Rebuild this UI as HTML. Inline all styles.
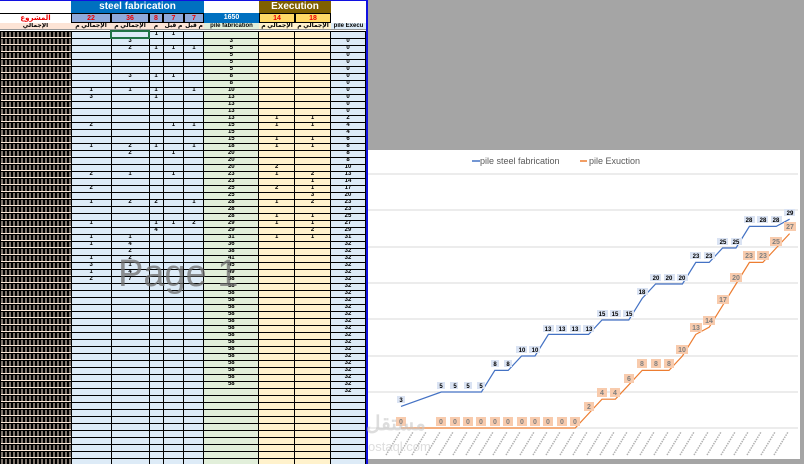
<!DOCTYPE html>
<html><head><meta charset="utf-8"><style>
*{margin:0;padding:0;box-sizing:border-box}
body{width:804px;height:464px;overflow:hidden;background:#a5a5a5;position:relative;font-family:"Liberation Sans","DejaVu Sans",sans-serif}
#sheet{position:absolute;left:0;top:0;width:368px;height:464px;background:#fff;border-top:1px solid #1010e0;border-right:2px solid #1010e0;overflow:hidden}
.h{position:absolute;text-align:center;font-weight:bold;overflow:hidden;white-space:nowrap}
table{position:absolute;left:0;top:29px;border-collapse:collapse;table-layout:fixed}
td{height:7px;border:1px solid #000;font-size:6px;line-height:5px;font-weight:bold;text-align:center;padding:0;overflow:hidden;background:#ddebf7}
td.a{background:#fde9d9 linear-gradient(90deg,#000 75%,transparent 75%) 1px 0/4px 5px repeat-x}
td.g{background:#e2efda}
td.y{background:#fff2cc}
</style></head><body>
<div id="sheet">
<div class="h" style="left:71px;top:0;width:133px;height:12px;background:#0070c0;color:#fff;font-size:10px;line-height:12px">steel fabrication</div>
<div class="h" style="left:259px;top:0;width:72px;height:12px;background:#7f6000;color:#fff;font-size:10px;line-height:11px">Execution</div>
<div class="h" style="left:0;top:12px;width:71px;height:10px;color:#e00;font-size:7px;line-height:10px;border-top:1px solid #000">المشروع</div>
<div class="h" style="left:71px;top:12px;width:40px;height:10px;background:#8ea9db;color:#e00;font-size:7px;line-height:10px;border:1px solid #000">22</div>
<div class="h" style="left:111px;top:12px;width:38px;height:10px;background:#8ea9db;color:#e00;font-size:7px;line-height:10px;border:1px solid #000">36</div>
<div class="h" style="left:149px;top:12px;width:14px;height:10px;background:#8ea9db;color:#e00;font-size:7px;line-height:10px;border:1px solid #000">8</div>
<div class="h" style="left:163px;top:12px;width:21px;height:10px;background:#8ea9db;color:#e00;font-size:7px;line-height:10px;border:1px solid #000">7</div>
<div class="h" style="left:184px;top:12px;width:20px;height:10px;background:#8ea9db;color:#e00;font-size:7px;line-height:10px;border:1px solid #000">7</div>
<div class="h" style="left:204px;top:12px;width:55px;height:10px;background:#0070c0;color:#fff;font-size:7px;line-height:10px">1650</div>
<div class="h" style="left:259px;top:12px;width:36px;height:10px;background:#ffd966;color:#e00;font-size:7px;line-height:10px;border:1px solid #000">14</div>
<div class="h" style="left:295px;top:12px;width:36px;height:10px;background:#ffd966;color:#e00;font-size:7px;line-height:10px;border:1px solid #000">18</div>
<div class="h" style="left:0;top:22px;width:71px;height:7px;background:#fce4d6;font-size:6px;line-height:7px">الإجمالي</div>
<div class="h" style="left:71px;top:22px;width:40px;height:7px;background:#fce4d6;font-size:6px;line-height:7px">الإجمالي م</div>
<div class="h" style="left:111px;top:22px;width:38px;height:7px;background:#fce4d6;font-size:6px;line-height:7px">الإجمالي م</div>
<div class="h" style="left:149px;top:22px;width:14px;height:7px;background:#fce4d6;font-size:6px;line-height:7px">م</div>
<div class="h" style="left:163px;top:22px;width:21px;height:7px;background:#fce4d6;font-size:6px;line-height:7px">م قبل</div>
<div class="h" style="left:184px;top:22px;width:20px;height:7px;background:#fce4d6;font-size:6px;line-height:7px">م قبل</div>
<div class="h" style="left:204px;top:22px;width:55px;height:7px;background:#e2efda;font-size:6px;line-height:7px">pile fabrication</div>
<div class="h" style="left:259px;top:22px;width:36px;height:7px;background:#fff2cc;font-size:6px;line-height:7px">الإجمالي م</div>
<div class="h" style="left:295px;top:22px;width:36px;height:7px;background:#fff2cc;font-size:6px;line-height:7px">الإجمالي م</div>
<div class="h" style="left:331px;top:22px;width:35px;height:7px;background:#ddebf7;font-size:6px;line-height:7px">pile Execu</div>
<table>
<colgroup><col style="width:71px"><col style="width:40px"><col style="width:38px"><col style="width:14px"><col style="width:21px"><col style="width:20px"><col style="width:55px"><col style="width:36px"><col style="width:36px"><col style="width:35px"></colgroup>
<tr><td class="a"></td><td></td><td style="border:2px solid #217346"></td><td>1</td><td>1</td><td></td><td class="g"></td><td class="y"></td><td class="y"></td><td></td></tr>
<tr><td class="a"></td><td></td><td>3</td><td></td><td></td><td></td><td class="g">3</td><td class="y"></td><td class="y"></td><td>0</td></tr>
<tr><td class="a"></td><td></td><td>2</td><td>1</td><td>1</td><td>1</td><td class="g">5</td><td class="y"></td><td class="y"></td><td>0</td></tr>
<tr><td class="a"></td><td></td><td></td><td></td><td></td><td></td><td class="g">5</td><td class="y"></td><td class="y"></td><td>0</td></tr>
<tr><td class="a"></td><td></td><td></td><td></td><td></td><td></td><td class="g">5</td><td class="y"></td><td class="y"></td><td>0</td></tr>
<tr><td class="a"></td><td></td><td></td><td></td><td></td><td></td><td class="g">5</td><td class="y"></td><td class="y"></td><td>0</td></tr>
<tr><td class="a"></td><td></td><td>3</td><td>1</td><td>1</td><td></td><td class="g">8</td><td class="y"></td><td class="y"></td><td>0</td></tr>
<tr><td class="a"></td><td></td><td></td><td></td><td></td><td></td><td class="g">8</td><td class="y"></td><td class="y"></td><td>0</td></tr>
<tr><td class="a"></td><td>1</td><td>1</td><td>1</td><td></td><td>1</td><td class="g">10</td><td class="y"></td><td class="y"></td><td>0</td></tr>
<tr><td class="a"></td><td>3</td><td></td><td>1</td><td></td><td></td><td class="g">13</td><td class="y"></td><td class="y"></td><td>0</td></tr>
<tr><td class="a"></td><td></td><td></td><td></td><td></td><td></td><td class="g">13</td><td class="y"></td><td class="y"></td><td>0</td></tr>
<tr><td class="a"></td><td></td><td></td><td></td><td></td><td></td><td class="g">13</td><td class="y"></td><td class="y"></td><td>0</td></tr>
<tr><td class="a"></td><td></td><td></td><td></td><td></td><td></td><td class="g">13</td><td class="y">1</td><td class="y">1</td><td>2</td></tr>
<tr><td class="a"></td><td>2</td><td></td><td></td><td>1</td><td>1</td><td class="g">15</td><td class="y">1</td><td class="y">1</td><td>4</td></tr>
<tr><td class="a"></td><td></td><td></td><td></td><td></td><td></td><td class="g">15</td><td class="y"></td><td class="y"></td><td>4</td></tr>
<tr><td class="a"></td><td></td><td></td><td></td><td></td><td></td><td class="g">15</td><td class="y">1</td><td class="y">1</td><td>6</td></tr>
<tr><td class="a"></td><td>1</td><td>2</td><td>1</td><td></td><td>1</td><td class="g">18</td><td class="y">1</td><td class="y">1</td><td>8</td></tr>
<tr><td class="a"></td><td></td><td>2</td><td></td><td>1</td><td></td><td class="g">20</td><td class="y"></td><td class="y"></td><td>8</td></tr>
<tr><td class="a"></td><td></td><td></td><td></td><td></td><td></td><td class="g">20</td><td class="y"></td><td class="y"></td><td>8</td></tr>
<tr><td class="a"></td><td></td><td></td><td></td><td></td><td></td><td class="g">20</td><td class="y">2</td><td class="y"></td><td>10</td></tr>
<tr><td class="a"></td><td>2</td><td>1</td><td></td><td>1</td><td></td><td class="g">23</td><td class="y">1</td><td class="y">2</td><td>13</td></tr>
<tr><td class="a"></td><td></td><td></td><td></td><td></td><td></td><td class="g">23</td><td class="y"></td><td class="y">1</td><td>14</td></tr>
<tr><td class="a"></td><td>2</td><td></td><td></td><td></td><td></td><td class="g">25</td><td class="y">2</td><td class="y">1</td><td>17</td></tr>
<tr><td class="a"></td><td></td><td></td><td></td><td></td><td></td><td class="g">25</td><td class="y"></td><td class="y">3</td><td>20</td></tr>
<tr><td class="a"></td><td>1</td><td>2</td><td>2</td><td></td><td>1</td><td class="g">28</td><td class="y">1</td><td class="y">2</td><td>23</td></tr>
<tr><td class="a"></td><td></td><td></td><td></td><td></td><td></td><td class="g">28</td><td class="y"></td><td class="y"></td><td>23</td></tr>
<tr><td class="a"></td><td></td><td></td><td></td><td></td><td></td><td class="g">28</td><td class="y">1</td><td class="y">1</td><td>25</td></tr>
<tr><td class="a"></td><td>1</td><td></td><td>1</td><td>1</td><td>2</td><td class="g">29</td><td class="y">1</td><td class="y">1</td><td>27</td></tr>
<tr><td class="a"></td><td></td><td></td><td>4</td><td></td><td></td><td class="g">29</td><td class="y"></td><td class="y">2</td><td>29</td></tr>
<tr><td class="a"></td><td>1</td><td>1</td><td></td><td></td><td></td><td class="g">31</td><td class="y">1</td><td class="y">1</td><td>31</td></tr>
<tr><td class="a"></td><td>1</td><td>4</td><td></td><td></td><td></td><td class="g">36</td><td class="y"></td><td class="y"></td><td>32</td></tr>
<tr><td class="a"></td><td></td><td>2</td><td></td><td></td><td></td><td class="g">38</td><td class="y"></td><td class="y"></td><td>32</td></tr>
<tr><td class="a"></td><td>1</td><td>2</td><td></td><td></td><td></td><td class="g">41</td><td class="y"></td><td class="y"></td><td>32</td></tr>
<tr><td class="a"></td><td>3</td><td>1</td><td></td><td></td><td></td><td class="g">45</td><td class="y"></td><td class="y"></td><td>32</td></tr>
<tr><td class="a"></td><td>1</td><td>4</td><td></td><td></td><td></td><td class="g">49</td><td class="y"></td><td class="y"></td><td>32</td></tr>
<tr><td class="a"></td><td>2</td><td>7</td><td></td><td></td><td></td><td class="g">58</td><td class="y"></td><td class="y"></td><td>32</td></tr>
<tr><td class="a"></td><td></td><td></td><td></td><td></td><td></td><td class="g">58</td><td class="y"></td><td class="y"></td><td>32</td></tr>
<tr><td class="a"></td><td></td><td></td><td></td><td></td><td></td><td class="g">58</td><td class="y"></td><td class="y"></td><td>32</td></tr>
<tr><td class="a"></td><td></td><td></td><td></td><td></td><td></td><td class="g">58</td><td class="y"></td><td class="y"></td><td>32</td></tr>
<tr><td class="a"></td><td></td><td></td><td></td><td></td><td></td><td class="g">58</td><td class="y"></td><td class="y"></td><td>32</td></tr>
<tr><td class="a"></td><td></td><td></td><td></td><td></td><td></td><td class="g">58</td><td class="y"></td><td class="y"></td><td>32</td></tr>
<tr><td class="a"></td><td></td><td></td><td></td><td></td><td></td><td class="g">58</td><td class="y"></td><td class="y"></td><td>32</td></tr>
<tr><td class="a"></td><td></td><td></td><td></td><td></td><td></td><td class="g">58</td><td class="y"></td><td class="y"></td><td>32</td></tr>
<tr><td class="a"></td><td></td><td></td><td></td><td></td><td></td><td class="g">58</td><td class="y"></td><td class="y"></td><td>32</td></tr>
<tr><td class="a"></td><td></td><td></td><td></td><td></td><td></td><td class="g">58</td><td class="y"></td><td class="y"></td><td>32</td></tr>
<tr><td class="a"></td><td></td><td></td><td></td><td></td><td></td><td class="g">58</td><td class="y"></td><td class="y"></td><td>32</td></tr>
<tr><td class="a"></td><td></td><td></td><td></td><td></td><td></td><td class="g">58</td><td class="y"></td><td class="y"></td><td>32</td></tr>
<tr><td class="a"></td><td></td><td></td><td></td><td></td><td></td><td class="g">58</td><td class="y"></td><td class="y"></td><td>32</td></tr>
<tr><td class="a"></td><td></td><td></td><td></td><td></td><td></td><td class="g">58</td><td class="y"></td><td class="y"></td><td>32</td></tr>
<tr><td class="a"></td><td></td><td></td><td></td><td></td><td></td><td class="g">58</td><td class="y"></td><td class="y"></td><td>32</td></tr>
<tr><td class="a"></td><td></td><td></td><td></td><td></td><td></td><td class="g">58</td><td class="y"></td><td class="y"></td><td>32</td></tr>
<tr><td class="a"></td><td></td><td></td><td></td><td></td><td></td><td class="g"></td><td class="y"></td><td class="y"></td><td>32</td></tr>
<tr><td class="a"></td><td></td><td></td><td></td><td></td><td></td><td class="g"></td><td class="y"></td><td class="y"></td><td></td></tr>
<tr><td class="a"></td><td></td><td></td><td></td><td></td><td></td><td class="g"></td><td class="y"></td><td class="y"></td><td></td></tr>
<tr><td class="a"></td><td></td><td></td><td></td><td></td><td></td><td class="g"></td><td class="y"></td><td class="y"></td><td></td></tr>
<tr><td class="a"></td><td></td><td></td><td></td><td></td><td></td><td class="g"></td><td class="y"></td><td class="y"></td><td></td></tr>
<tr><td class="a"></td><td></td><td></td><td></td><td></td><td></td><td class="g"></td><td class="y"></td><td class="y"></td><td></td></tr>
<tr><td class="a"></td><td></td><td></td><td></td><td></td><td></td><td class="g"></td><td class="y"></td><td class="y"></td><td></td></tr>
<tr><td class="a"></td><td></td><td></td><td></td><td></td><td></td><td class="g"></td><td class="y"></td><td class="y"></td><td></td></tr>
<tr><td class="a"></td><td></td><td></td><td></td><td></td><td></td><td class="g"></td><td class="y"></td><td class="y"></td><td></td></tr>
<tr><td class="a"></td><td></td><td></td><td></td><td></td><td></td><td class="g"></td><td class="y"></td><td class="y"></td><td></td></tr>
<tr><td class="a"></td><td></td><td></td><td></td><td></td><td></td><td class="g"></td><td class="y"></td><td class="y"></td><td></td></tr>
</table>
<div style="position:absolute;left:0;top:28px;width:366px;height:1px;background:#999"></div>
<div style="position:absolute;left:118px;top:252px;font-size:38px;color:rgba(110,110,110,.75);white-space:nowrap">Page 1</div>
</div>
<svg width="804" height="464" style="position:absolute;left:0;top:0" font-family="Liberation Sans, sans-serif">
<rect x="368" y="150" width="432" height="309" fill="#fff"/>
<g stroke="#d9d9d9" stroke-width="1">
<line x1="368" y1="174" x2="798" y2="174"/><line x1="368" y1="210" x2="798" y2="210"/><line x1="368" y1="247" x2="798" y2="247"/><line x1="368" y1="283" x2="798" y2="283"/><line x1="368" y1="319" x2="798" y2="319"/><line x1="368" y1="356" x2="798" y2="356"/><line x1="368" y1="392" x2="798" y2="392"/><line x1="368" y1="428" x2="798" y2="428"/>
</g>
<line x1="472" y1="161" x2="480" y2="161" stroke="#4472c4" stroke-width="1.5"/>
<text x="480" y="164" font-size="9" fill="#595959">pile steel fabrication</text>
<line x1="580" y1="161" x2="587" y2="161" stroke="#ed7d31" stroke-width="1.5"/>
<text x="589" y="164" font-size="9" fill="#595959">pile Exuction</text>
<polyline fill="none" stroke="#4472c4" stroke-width="1.2" points="401,406.4 441.2,392 454.6,392 468,392 481.4,392 494.8,370.4 508.2,370.4 521.6,356 535,356 548.4,334.4 561.8,334.4 575.2,334.4 588.6,334.4 602,320 615.4,320 628.8,320 642.2,298.4 655.6,284 669,284 682.4,284 695.8,262.4 709.2,262.4 722.6,248 736,248 749.4,226.4 762.8,226.4 776.2,226.4 789.6,219.2"/>
<polyline fill="none" stroke="#ed7d31" stroke-width="1.2" points="401,428 441.2,428 454.6,428 468,428 481.4,428 494.8,428 508.2,428 521.6,428 535,428 548.4,428 561.8,428 575.2,428 588.6,413.6 602,399.2 615.4,399.2 628.8,384.8 642.2,370.4 655.6,370.4 669,370.4 682.4,356 695.8,334.4 709.2,327.2 722.6,305.6 736,284 749.4,262.4 762.8,262.4 776.2,248 789.6,233.6"/>
<g font-size="6" font-weight="bold" text-anchor="middle" fill="#000">
<g fill="#dae3f3">
<rect x="397" y="396" width="8" height="7"/><rect x="437" y="382" width="8" height="7"/><rect x="450" y="382" width="8" height="7"/><rect x="464" y="382" width="8" height="7"/><rect x="477" y="382" width="8" height="7"/><rect x="491" y="360" width="8" height="7"/><rect x="504" y="360" width="8" height="7"/><rect x="516" y="346" width="11" height="7"/><rect x="529" y="346" width="11" height="7"/><rect x="543" y="325" width="11" height="7"/><rect x="556" y="325" width="11" height="7"/><rect x="570" y="325" width="11" height="7"/><rect x="583" y="325" width="11" height="7"/><rect x="597" y="310" width="11" height="7"/><rect x="610" y="310" width="11" height="7"/><rect x="623" y="310" width="11" height="7"/><rect x="637" y="288" width="11" height="7"/><rect x="650" y="274" width="11" height="7"/><rect x="664" y="274" width="11" height="7"/><rect x="677" y="274" width="11" height="7"/><rect x="690" y="252" width="11" height="7"/><rect x="704" y="252" width="11" height="7"/><rect x="717" y="238" width="11" height="7"/><rect x="731" y="238" width="11" height="7"/><rect x="744" y="216" width="11" height="7"/><rect x="757" y="216" width="11" height="7"/><rect x="771" y="216" width="11" height="7"/><rect x="784" y="209" width="11" height="7"/>
</g>
<text x="401" y="402">3</text><text x="441" y="388">5</text><text x="455" y="388">5</text><text x="468" y="388">5</text><text x="481" y="388">5</text><text x="495" y="366">8</text><text x="508" y="366">8</text><text x="522" y="352">10</text><text x="535" y="352">10</text><text x="548" y="331">13</text><text x="562" y="331">13</text><text x="575" y="331">13</text><text x="589" y="331">13</text><text x="602" y="316">15</text><text x="615" y="316">15</text><text x="629" y="316">15</text><text x="642" y="294">18</text><text x="656" y="280">20</text><text x="669" y="280">20</text><text x="682" y="280">20</text><text x="696" y="258">23</text><text x="709" y="258">23</text><text x="723" y="244">25</text><text x="736" y="244">25</text><text x="749" y="222">28</text><text x="763" y="222">28</text><text x="776" y="222">28</text><text x="790" y="215">29</text>
</g>
<g font-size="7" font-weight="bold" text-anchor="middle" fill="#7f7f7f">
<g fill="#f8cbad">
<rect x="396" y="417" width="10" height="9"/><rect x="436" y="417" width="10" height="9"/><rect x="450" y="417" width="10" height="9"/><rect x="463" y="417" width="10" height="9"/><rect x="476" y="417" width="10" height="9"/><rect x="490" y="417" width="10" height="9"/><rect x="503" y="417" width="10" height="9"/><rect x="517" y="417" width="10" height="9"/><rect x="530" y="417" width="10" height="9"/><rect x="543" y="417" width="10" height="9"/><rect x="557" y="417" width="10" height="9"/><rect x="570" y="417" width="10" height="9"/><rect x="584" y="402" width="10" height="9"/><rect x="597" y="388" width="10" height="9"/><rect x="610" y="388" width="10" height="9"/><rect x="624" y="374" width="10" height="9"/><rect x="637" y="359" width="10" height="9"/><rect x="651" y="359" width="10" height="9"/><rect x="664" y="359" width="10" height="9"/><rect x="676" y="345" width="12" height="9"/><rect x="690" y="323" width="12" height="9"/><rect x="703" y="316" width="12" height="9"/><rect x="717" y="295" width="12" height="9"/><rect x="730" y="273" width="12" height="9"/><rect x="743" y="251" width="12" height="9"/><rect x="757" y="251" width="12" height="9"/><rect x="770" y="237" width="12" height="9"/><rect x="784" y="222" width="12" height="9"/>
</g>
<text x="401" y="424">0</text><text x="441" y="424">0</text><text x="455" y="424">0</text><text x="468" y="424">0</text><text x="481" y="424">0</text><text x="495" y="424">0</text><text x="508" y="424">0</text><text x="522" y="424">0</text><text x="535" y="424">0</text><text x="548" y="424">0</text><text x="562" y="424">0</text><text x="575" y="424">0</text><text x="589" y="409">2</text><text x="602" y="395">4</text><text x="615" y="395">4</text><text x="629" y="381">6</text><text x="642" y="366">8</text><text x="656" y="366">8</text><text x="669" y="366">8</text><text x="682" y="352">10</text><text x="696" y="330">13</text><text x="709" y="323">14</text><text x="723" y="302">17</text><text x="736" y="280">20</text><text x="749" y="258">23</text><text x="763" y="258">23</text><text x="776" y="244">25</text><text x="790" y="229">27</text>
</g>
<g stroke="#b0b0b0" stroke-width="1.5" stroke-dasharray="1.5 1">
<line x1="386" y1="455" x2="400" y2="432"/><line x1="399" y1="455" x2="413" y2="432"/><line x1="412" y1="455" x2="426" y2="432"/><line x1="426" y1="455" x2="440" y2="432"/><line x1="439" y1="455" x2="453" y2="432"/><line x1="453" y1="455" x2="467" y2="432"/><line x1="466" y1="455" x2="480" y2="432"/><line x1="479" y1="455" x2="493" y2="432"/><line x1="493" y1="455" x2="507" y2="432"/><line x1="506" y1="455" x2="520" y2="432"/><line x1="520" y1="455" x2="534" y2="432"/><line x1="533" y1="455" x2="547" y2="432"/><line x1="546" y1="455" x2="560" y2="432"/><line x1="560" y1="455" x2="574" y2="432"/><line x1="573" y1="455" x2="587" y2="432"/><line x1="587" y1="455" x2="601" y2="432"/><line x1="600" y1="455" x2="614" y2="432"/><line x1="613" y1="455" x2="627" y2="432"/><line x1="627" y1="455" x2="641" y2="432"/><line x1="640" y1="455" x2="654" y2="432"/><line x1="654" y1="455" x2="668" y2="432"/><line x1="667" y1="455" x2="681" y2="432"/><line x1="680" y1="455" x2="694" y2="432"/><line x1="694" y1="455" x2="708" y2="432"/><line x1="707" y1="455" x2="721" y2="432"/><line x1="721" y1="455" x2="735" y2="432"/><line x1="734" y1="455" x2="748" y2="432"/><line x1="747" y1="455" x2="761" y2="432"/><line x1="761" y1="455" x2="775" y2="432"/><line x1="774" y1="455" x2="788" y2="432"/>
</g>
<text x="366" y="430" font-size="20" font-weight="bold" fill="#c8c8c8" opacity="0.6">مستقل</text>
<text x="368" y="451" font-size="13" fill="#c8c8c8" opacity="0.6">ostaql.com</text>
</svg>
</body></html>
